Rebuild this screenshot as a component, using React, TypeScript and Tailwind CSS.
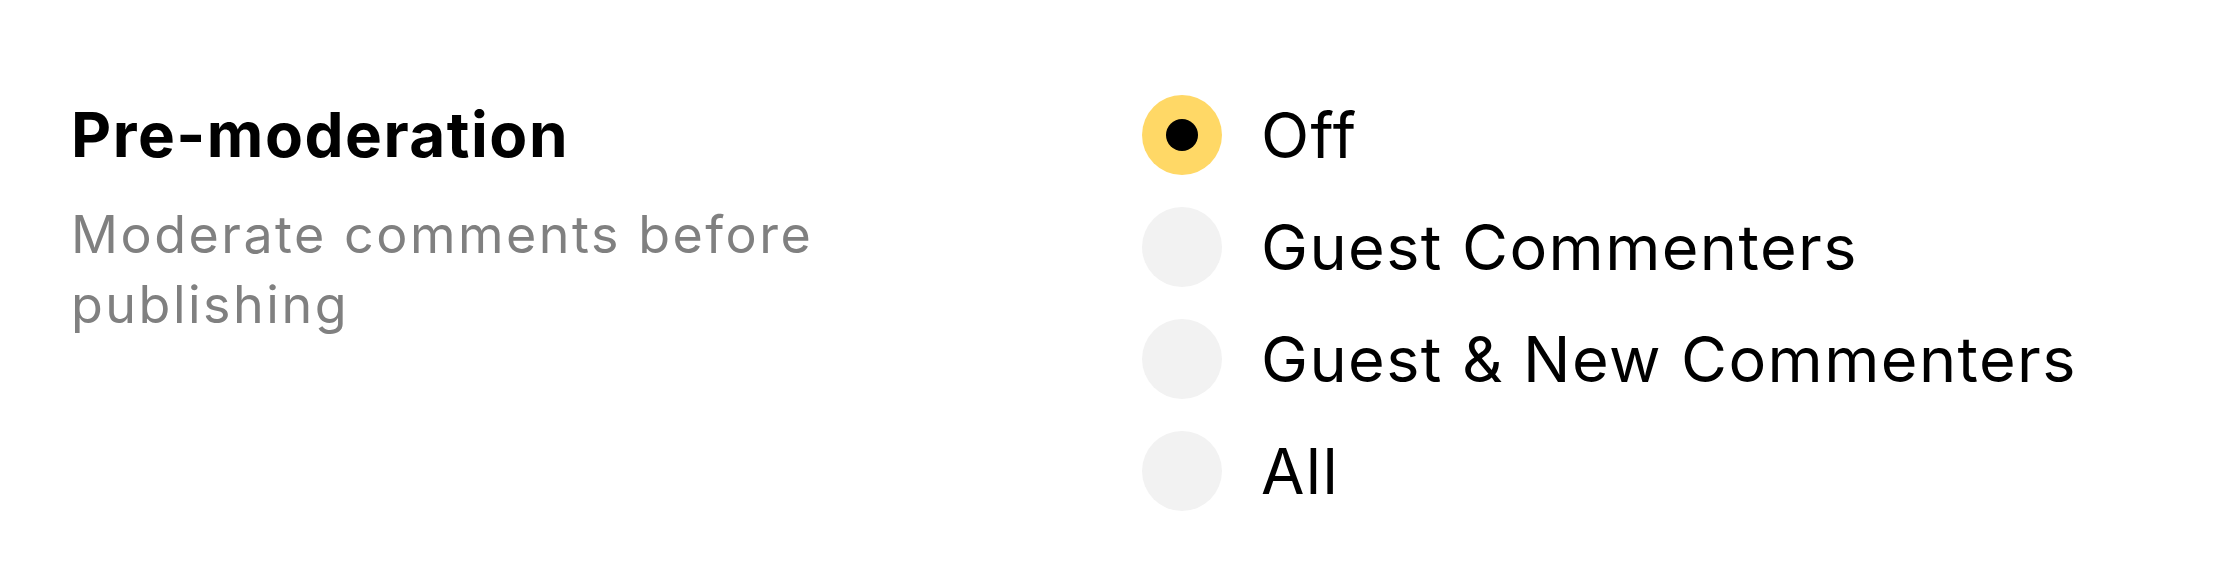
import React from "react";

const options = ["Off", "Guest Commenters", "Guest & New Commenters", "All"];

export default function App() {
  const selected = 0;
  return (
    <div className="w-[2232px] h-[568px] bg-white flex pl-[71px] pt-[95px] font-['Inter',sans-serif] text-black">
      <div className="w-[1071px] shrink-0">
        <h2 className="text-[62px] font-bold leading-[80px] tracking-[1.5px]">Pre-moderation</h2>
        <p className="mt-[25px] w-[850px] text-[52px] leading-[70px] tracking-[2.5px] text-[#808080]">
          Moderate comments before publishing
        </p>
      </div>
      <div className="flex flex-col gap-[32px]">
        {options.map((o, i) => (
          <label key={o} className="flex items-center gap-[39px] h-[80px] cursor-pointer">
            <span
              className={
                i === selected
                  ? "w-[80px] h-[80px] rounded-full bg-[#FFD866] flex items-center justify-center shrink-0"
                  : "w-[80px] h-[80px] rounded-full bg-[#F2F2F2] flex items-center justify-center shrink-0"
              }
            >
              {i === selected && <span className="w-[32px] h-[32px] rounded-full bg-black" />}
            </span>
            <span className="text-[63px] leading-[80px] tracking-[1.4px] whitespace-nowrap">{o}</span>
          </label>
        ))}
      </div>
    </div>
  );
}
